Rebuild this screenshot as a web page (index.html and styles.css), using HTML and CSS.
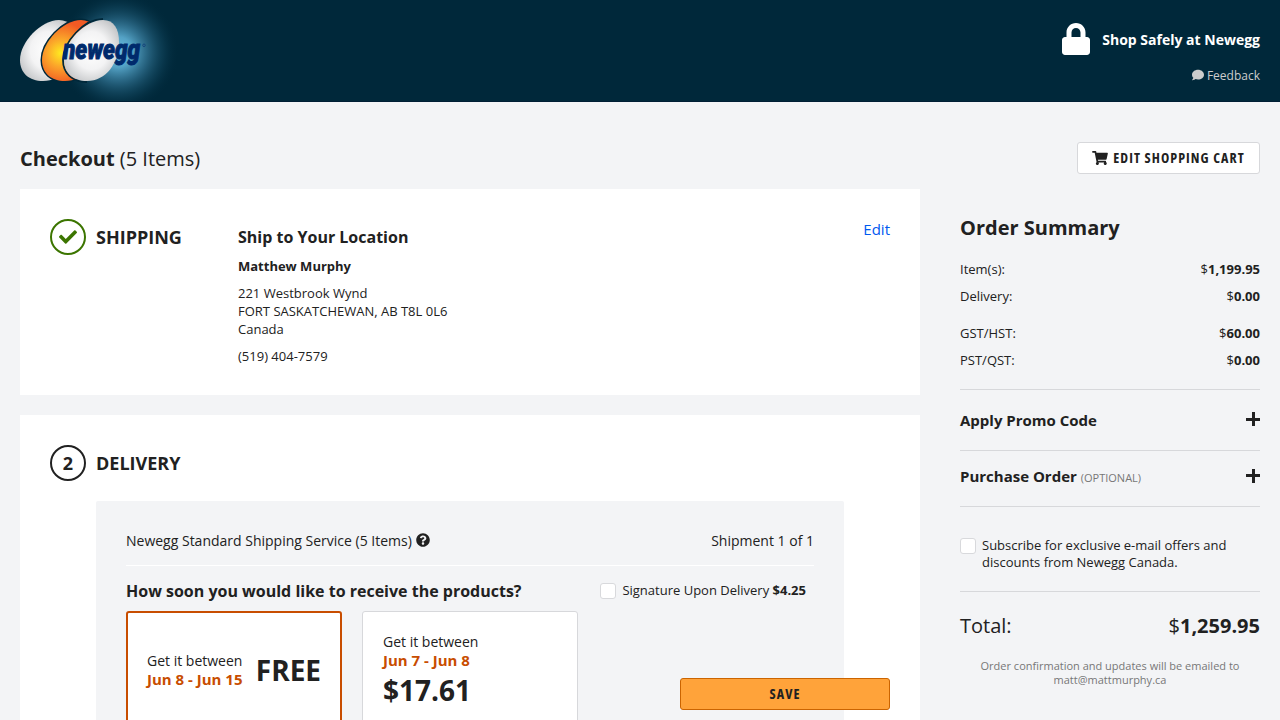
FILE: index.html
```html
<!DOCTYPE html>
<html lang="en">
<head>
<meta charset="utf-8">
<title>Newegg Checkout</title>
<link rel="stylesheet" href="styles.css">
</head>
<body>
<header class="site-header">
  <svg class="logo" width="220" height="101" viewBox="0 0 220 101" role="img" aria-label="newegg">
    <defs>
      <radialGradient id="glow"><stop offset="0" stop-color="#6cc0e6"/><stop offset=".25" stop-color="#58a8cc" stop-opacity=".95"/><stop offset=".5" stop-color="#35799a" stop-opacity=".7"/><stop offset=".75" stop-color="#1a5570" stop-opacity=".35"/><stop offset="1" stop-color="#00283a" stop-opacity="0"/></radialGradient>
      <radialGradient id="shell" cx=".5" cy=".5" r=".62"><stop offset="0" stop-color="#fff"/><stop offset=".5" stop-color="#f3f3f4"/><stop offset="1" stop-color="#bcbec0"/></radialGradient>
      <radialGradient id="yolk" gradientUnits="userSpaceOnUse" cx="61" cy="53" r="31"><stop offset="0" stop-color="#ffec20"/><stop offset=".45" stop-color="#fba52a"/><stop offset="1" stop-color="#f15a24"/></radialGradient>
      <path id="egg" d="M64 60C64 42 85 20 103 20C114 20 119 29 119 42C119 63 106 81 87 81C73 81 64 73 64 60Z"/>
    </defs>
    <circle cx="118" cy="52" r="61" fill="url(#glow)"/>
    <use href="#egg" x="-44" fill="url(#shell)"/>
    <use href="#egg" x="-22" fill="none" stroke="#00283a" stroke-width="3"/>
    <path d="M42 60C42 42 63 20 81 20C92 20 97 29 97 42C97 63 84 81 65 81C51 81 42 73 42 60Z" fill="url(#yolk)"/>
    <path d="M87 82C72 82 63 73 63 60C63 42 84 19 103 19" fill="none" stroke="#00283a" stroke-width="1.800"/>
    <use href="#egg" fill="url(#shell)"/>
    <text class="wordmark" x="63" y="59" textLength="77" lengthAdjust="spacingAndGlyphs">newegg</text>
    <circle cx="144" cy="45.300" r="1.300" fill="none" stroke="#123d78" stroke-width=".8"/>
  </svg>
  <div class="header-links">
    <div class="safe">
      <svg width="28" height="32" viewBox="0 0 448 512"><path fill="currentColor" d="M400 224h-24v-72C376 68.200 307.800 0 224 0S72 68.200 72 152v72H48c-26.500 0-48 21.500-48 48v192c0 26.500 21.500 48 48 48h352c26.500 0 48-21.500 48-48V272c0-26.500-21.500-48-48-48zm-104 0H152v-72c0-39.700 32.300-72 72-72s72 32.300 72 72v72z"/></svg>
      <span>Shop Safely at Newegg</span>
    </div>
    <div class="feedback">
      <svg width="12" height="12" viewBox="0 0 512 512"><path fill="currentColor" d="M256 32C114.600 32 0 125.100 0 240c0 49.600 21.400 95 57 130.700C44.500 421.100 2.700 466 2.200 466.500c-2.200 2.300-2.800 5.700-1.500 8.700S4.800 480 8 480c66.300 0 116-31.800 140.600-51.400 32.700 12.300 69 19.400 107.400 19.400 141.400 0 256-93.100 256-208S397.400 32 256 32z"/></svg>
      <span>Feedback</span>
    </div>
  </div>
</header>
<div class="page-head">
  <h1>Checkout <span>(5 Items)</span></h1>
  <button class="cart-button">
    <svg width="16" height="14" viewBox="0 0 576 512"><path fill="currentColor" d="M528.120 301.319l47.273-208C578.806 78.301 567.391 64 551.990 64H159.208l-9.166-44.810C147.758 8.021 137.930 0 126.529 0H24C10.745 0 0 10.745 0 24v16c0 13.255 10.745 24 24 24h69.883l70.248 343.435C147.325 417.100 136 435.222 136 456c0 30.928 25.072 56 56 56s56-25.072 56-56c0-15.674-6.447-29.835-16.824-40h209.647C430.447 426.165 424 440.326 424 456c0 30.928 25.072 56 56 56s56-25.072 56-56c0-22.172-12.888-41.332-31.579-50.405l5.517-24.276c3.413-15.018-8.002-29.319-23.403-29.319H218.117l-6.545-32h293.145c11.206 0 20.920-7.754 23.403-18.681z"/></svg>
    <span>EDIT SHOPPING CART</span>
  </button>
</div>
<div class="columns">
  <main class="steps">
    <section class="card shipping">
      <div class="step-title">
        <span class="step-mark done"><svg width="18" height="18" viewBox="0 0 512 512"><path fill="currentColor" d="M173.898 439.404l-166.400-166.400c-9.997-9.997-9.997-26.206 0-36.204l36.203-36.204c9.997-9.998 26.207-9.998 36.204 0L192 312.690 432.095 72.596c9.997-9.997 26.207-9.997 36.204 0l36.203 36.204c9.997 9.997 9.997 26.206 0 36.204l-294.400 294.401c-9.998 9.997-26.207 9.997-36.204-.001z"/></svg></span>
        <h2>SHIPPING</h2>
      </div>
      <div class="address">
        <h3>Ship to Your Location</h3>
        <p class="name">Matthew Murphy</p>
        <p>221 Westbrook Wynd<br>FORT SASKATCHEWAN, AB T8L 0L6<br>Canada</p>
        <p>(519) 404-7579</p>
      </div>
      <a class="edit">Edit</a>
    </section>
    <section class="card delivery">
      <div class="step-title"><span class="step-mark">2</span><h2>DELIVERY</h2></div>
      <div class="shipment">
        <div class="shipment-head">
          <span>Newegg Standard Shipping Service (5 Items)</span>
          <svg width="14" height="14" viewBox="0 0 512 512"><path fill="currentColor" d="M504 256c0 136.997-111.043 248-248 248S8 392.997 8 256C8 119.083 119.043 8 256 8s248 111.083 248 248zM262.655 90c-54.497 0-89.255 22.957-116.549 63.758-3.536 5.286-2.353 12.415 2.715 16.258l34.699 26.310c5.205 3.947 12.621 3.008 16.665-2.122 17.864-22.658 30.113-35.797 57.303-35.797 20.429 0 45.698 13.148 45.698 32.958 0 14.976-12.363 22.667-32.534 33.976C247.128 238.528 216 254.941 216 296v4c0 6.627 5.373 12 12 12h56c6.627 0 12-5.373 12-12v-1.333c0-28.462 83.186-29.647 83.186-106.667 0-58.002-60.165-102-116.531-102zM256 338c-25.365 0-46 20.635-46 46 0 25.364 20.635 46 46 46s46-20.636 46-46c0-25.365-20.635-46-46-46z"/></svg>
          <span class="count">Shipment 1 of 1</span>
        </div>
        <div class="speed-head">
          <h3>How soon you would like to receive the products?</h3>
          <div class="signature"><i class="check"></i><span>Signature Upon Delivery <b>$4.25</b></span></div>
        </div>
        <div class="options">
          <div class="option selected"><p>Get it between<br><b class="date">Jun 8 - Jun 15</b></p><strong>FREE</strong></div>
          <div class="option"><p>Get it between<br><b class="date">Jun 7 - Jun 8</b></p><strong>$17.61</strong></div>
        </div>
      </div>
    </section>
  </main>
  <aside class="summary">
    <h2>Order Summary</h2>
    <div class="line"><span>Item(s):</span><span>$<b>1,199.95</b></span></div>
    <div class="line"><span>Delivery:</span><span>$<b>0.00</b></span></div>
    <div class="line taxes"><span>GST/HST:</span><span>$<b>60.00</b></span></div>
    <div class="line"><span>PST/QST:</span><span>$<b>0.00</b></span></div>
    <div class="fold promo"><b>Apply Promo Code</b><i class="plus"></i></div>
    <div class="fold order"><span><b>Purchase Order</b> <small>(OPTIONAL)</small></span><i class="plus"></i></div>
    <div class="subscribe"><i class="check"></i><span>Subscribe for exclusive e-mail offers and discounts from Newegg Canada.</span></div>
    <div class="total"><span>Total:</span><span>$<b>1,259.95</b></span></div>
    <p class="note">Order confirmation and updates will be emailed to matt@mattmurphy.ca</p>
  </aside>
</div>
<button class="save"><span>SAVE</span></button>
</body>
</html>
```

FILE: styles.css
```css
* { box-sizing: border-box; }
html { overflow: hidden; }
body { margin: 0; height: 720px; overflow: hidden; position: relative; background: #f3f4f6; color: #212121; font: 13px/18px "Open Sans", sans-serif; }
h1, h2, h3, p { margin: 0; }
svg { display: block; flex: none; }
button { font-family: "Open Sans", sans-serif; font-weight: 700; font-stretch: 75%; font-size: 14px; letter-spacing: 1.05px; color: #212121; border-radius: 3px; }
button span { padding-bottom: 2px; }

.site-header { height: 102px; display: flex; justify-content: space-between; background: #00283a; color: #fff; border-bottom: 1px solid #001f35; }
.wordmark { font: italic 900 28px Roboto, sans-serif; fill: #002a6c; stroke: #002a6c; stroke-width: 1; }
.header-links { padding: 23px 20px 0 0; display: flex; flex-direction: column; align-items: flex-end; }
.safe { display: flex; align-items: center; gap: 12px; height: 32px; font-size: 14px; font-weight: 700; line-height: 32px; }
.safe span { padding-top: 2px; }
.feedback { display: flex; align-items: center; gap: 3px; height: 18px; margin-top: 11px; font-size: 12px; color: #ccc; }
.feedback span { padding-top: 2px; }

.page-head { display: flex; justify-content: space-between; padding: 40px 20px 15px; }
.page-head h1 { font-size: 20px; line-height: 34px; margin-bottom: -2px; }
.page-head h1 span { font-weight: 400; }
.cart-button { display: flex; align-items: center; justify-content: center; gap: 5px; width: 183px; height: 32px; padding: 0; background: #fff; border: 1px solid #d7d8db; }

.columns { display: flex; gap: 40px; padding: 0 20px; }
.steps { width: 900px; display: flex; flex-direction: column; gap: 20px; }
.card { background: #fff; padding: 30px; }
.shipping { display: flex; }
.step-title { display: flex; align-items: center; gap: 10px; width: 188px; height: 36px; }
.step-title h2 { font-size: 18px; }
.step-mark { width: 36px; height: 36px; display: flex; align-items: center; justify-content: center; border: 2px solid #212121; border-radius: 50%; font-size: 18px; font-weight: 700; }
.done { border-color: #3c7500; color: #3c7500; }
.address { flex: 1; display: flex; flex-direction: column; gap: 9px; }
.address h3 { font-size: 16px; line-height: 36px; margin-bottom: -7px; }
.name { font-weight: 700; }
.edit { color: #0059f0; font-size: 15px; line-height: 20px; }
.shipment { margin: 20px 46px 0; padding: 30px 30px 60px; background: #f3f4f6; border-radius: 2px; }
.shipment-head { display: flex; align-items: center; gap: 4px; height: 35px; padding-bottom: 16px; border-bottom: 1px solid #fff; font-size: 14px; }
.shipment-head span { padding-top: 2px; }
.shipment-head .count { margin-left: auto; }
.speed-head { display: flex; justify-content: space-between; align-items: center; height: 34px; margin: 8px 8px 3px 0; }
.speed-head h3 { font-size: 16px; }
.signature { display: flex; align-items: center; gap: 6px; }
.signature span { padding-bottom: 2px; }
.check { width: 16px; height: 16px; flex: none; border: 1px solid #d8d9dc; border-radius: 3px; background: #fff; }
.options { display: flex; gap: 20px; }
.option { width: 216px; height: 120px; padding: 20px; background: #fff; border: 1px solid #d7d8db; border-radius: 3px; font-size: 14px; line-height: 19px; }
.option strong { font-size: 28px; line-height: 40px; }
.date { color: #c84d00; font-size: 15px; }
.selected { display: flex; align-items: center; justify-content: space-between; padding: 0 19px 2px; border: 2px solid #c84d00; }

.summary { width: 300px; padding-top: 24px; }
.summary h2 { font-size: 20px; line-height: 30px; margin-bottom: 17px; }
.line { display: flex; justify-content: space-between; margin-bottom: 9px; }
.taxes { margin-top: 19px; }
.fold { display: flex; justify-content: space-between; align-items: center; border-top: 1px solid #d7d8db; font-size: 15px; }
.promo { height: 61px; margin-top: 20px; }
.order { height: 56px; padding-bottom: 3px; }
.fold small { font-size: 11px; color: #777; }
.plus { width: 14px; height: 14px; margin-bottom: 2px; background: linear-gradient(#212121, #212121) center / 14px 3px no-repeat, linear-gradient(#212121, #212121) center / 3px 14px no-repeat; }
.order .plus { margin-bottom: 3px; }
.subscribe { display: flex; gap: 6px; height: 85px; padding-top: 31px; border-top: 1px solid #d7d8db; line-height: 17px; }
.subscribe span { margin-top: -1px; }
.total { display: flex; justify-content: space-between; border-top: 1px solid #d7d8db; padding-top: 19px; font-size: 20px; line-height: 30px; }
.note { margin-top: 18px; padding: 0 15px; text-align: center; font-size: 11px; line-height: 14px; color: #777; }
.save { display: flex; align-items: center; justify-content: center; position: absolute; left: 680px; top: 678px; width: 210px; height: 32px; padding: 0; background: #ffa33a; border: 1px solid #cb6400; }
```
